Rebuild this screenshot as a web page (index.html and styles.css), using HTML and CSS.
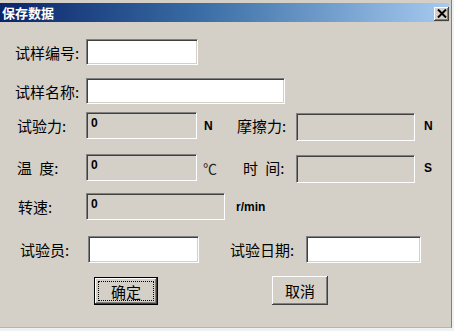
FILE: index.html
```html
<!DOCTYPE html>
<html lang="zh">
<head>
<meta charset="utf-8">
<title>保存数据</title>
<link rel="stylesheet" href="styles.css">
</head>
<body>
<div class="win">
  <div class="title">
    <span class="title-text">保存数据</span>
    <span class="close"><svg width="10" height="9" viewBox="0 0 10 9"><path d="M1 0.5 L9 8.5 M9 0.5 L1 8.5" stroke="#000" stroke-width="2"/></svg></span>
  </div>
  <div class="content">
    <div class="row r1">
      <div class="lab pl15">试样编号:</div>
      <div class="field w112"></div>
    </div>
    <div class="row r2">
      <div class="lab pl15">试样名称:</div>
      <div class="field w199"></div>
    </div>
    <div class="row r3">
      <div class="lab pl17">试验力:</div>
      <div class="field ro w111">0</div>
      <div class="unit uw40 pl7">N</div>
      <div class="rlab w59">摩擦力:</div>
      <div class="field ro w119 tall"></div>
      <div class="unit pl9">N</div>
    </div>
    <div class="row r4">
      <div class="lab pl17 sp">温 度:</div>
      <div class="field ro w111">0</div>
      <div class="unit uw40 pl6 thin">℃</div>
      <div class="rlab w59 pl6 sp">时 间:</div>
      <div class="field ro w119 tall"></div>
      <div class="unit pl9">S</div>
    </div>
    <div class="row r5">
      <div class="lab pl18">转速:</div>
      <div class="field ro w139">0</div>
      <div class="unit pl11">r/min</div>
    </div>
    <div class="row r6">
      <div class="lab pl20 w88">试验员:</div>
      <div class="field w111"></div>
      <div class="rlab w107 pl31">试验日期:</div>
      <div class="field w115"></div>
    </div>
    <div class="row r7">
      <button class="btn default">确定</button>
      <button class="btn cancel">取消</button>
    </div>
  </div>
</div>
</body>
</html>
```
FILE: styles.css
```css
* { box-sizing: border-box; }
html, body { margin: 0; padding: 0; }
body {
  width: 454px;
  height: 331px;
  background: #eef2f2;
  overflow: hidden;
  font-family: "Noto Sans CJK SC", "Liberation Sans", sans-serif;
}
.win {
  width: 452px;
  height: 328px;
  background: #d4d0c8;
  padding: 3px 2px 0 0;
  border-right: 1px solid #808080;
  border-bottom: 1px solid #b8b4ac;
}
.title {
  height: 19px;
  background: linear-gradient(to right, #0a246a 0%, #3a6ea5 45%, #a6caf0 100%);
  display: flex;
  align-items: center;
  justify-content: space-between;
  padding: 0 0 0 2px;
}
.title-text {
  color: #fff;
  font-weight: bold;
  font-size: 13px;
  line-height: 1;
}
.close {
  width: 15px;
  height: 14px;
  background: #d4d0c8;
  display: flex;
  align-items: center;
  justify-content: center;
  margin-top: 2px;
  box-shadow: inset -1px -1px #404040, inset 1px 1px #fff, inset -2px -2px #808080;
}
.content { padding-top: 17px; }
.row {
  display: flex;
  align-items: center;
  height: 26px;
}
.r1 { margin-top: 0; }
.r2 { margin-top: 13px; }
.r3 { margin-top: 8px; height: 27px; align-items: flex-start; }
.r4 { margin-top: 15px; height: 27px; align-items: flex-start; }
.r5 { margin-top: 12px; height: 27px; }
.r6 { margin-top: 16px; height: 27px; }
.r7 { margin-top: 14px; height: 29px; align-items: flex-start; padding-left: 94px; }

.lab, .rlab {
  font-size: 15px;
  color: #000;
  white-space: nowrap;
  line-height: 27px;
  align-self: center;
}
.lab { width: 86px; flex: none; }
.w88 { width: 88px; }
.rlab { flex: none; }
.sp { word-spacing: 4px; }
.pl6 { padding-left: 6px; }
.pl7 { padding-left: 7px; }
.pl9 { padding-left: 9px; }
.pl11 { padding-left: 11px; }
.pl15 { padding-left: 15px; }
.pl17 { padding-left: 17px; }
.pl18 { padding-left: 18px; }
.pl20 { padding-left: 20px; }
.pl31 { padding-left: 31px; }
.w59 { width: 59px; }
.w107 { width: 107px; }

.field {
  flex: none;
  height: 100%;
  background: #fff;
  border-top: 1px solid #808080;
  border-left: 1px solid #808080;
  border-bottom: 1px solid #fff;
  border-right: 1px solid #fff;
  box-shadow: inset 1px 1px #404040, inset -1px -1px #d4d0c8;
  font-family: "Liberation Sans", sans-serif;
  font-weight: bold;
  font-size: 12px;
  line-height: 14px;
  padding: 3px 0 0 4px;
  color: #000;
}
.field.ro { background: #d4d0c8; }
.field.tall { height: 28px; margin-top: 1px; }
.w111 { width: 111px; }
.w112 { width: 112px; }
.w115 { width: 115px; }
.w119 { width: 119px; }
.w139 { width: 139px; }
.w199 { width: 199px; }

.unit {
  flex: none;
  font-family: "Liberation Sans", sans-serif;
  font-weight: bold;
  font-size: 12px;
  color: #000;
  align-self: center;
  line-height: 14px;
}
.uw40 { width: 40px; }
.unit.thin {
  font-family: "Noto Sans CJK SC", sans-serif;
  font-weight: normal;
  font-size: 14px;
  line-height: 18px;
  color: #222;
}

.btn {
  position: relative;
  flex: none;
  font-family: "Noto Sans CJK SC", sans-serif;
  font-size: 15px;
  line-height: 1;
  color: #000;
  background: #d4d0c8;
  border: none;
  padding: 0;
  margin: 0;
  box-shadow: inset -1px -1px #404040, inset 1px 1px #fff, inset -2px -2px #808080;
}
.btn.default {
  width: 64px;
  height: 28px;
  border: 1px solid #000;
}
.btn.default::after {
  content: "";
  position: absolute;
  left: 3px;
  top: 3px;
  right: 3px;
  bottom: 3px;
  border: 1px dotted #000;
}
.btn.cancel {
  width: 56px;
  height: 29px;
  margin-left: 114px;
  margin-top: -1px;
}
```
